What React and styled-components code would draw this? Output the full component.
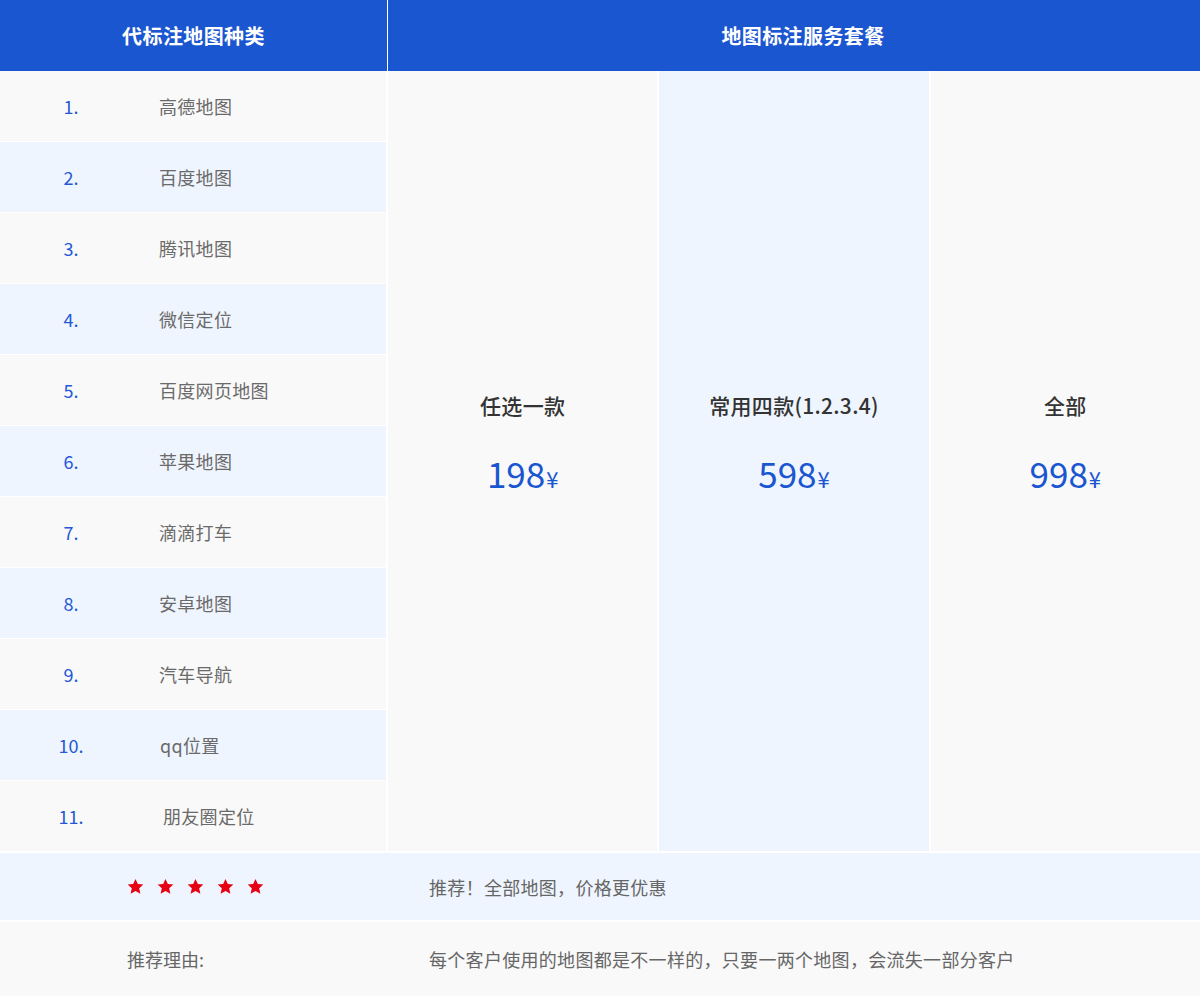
import React from 'react';
import styled, { createGlobalStyle } from 'styled-components';

const GlobalStyle = createGlobalStyle`
  html, body {
    margin: 0;
    padding: 0;
    background: #ffffff;
  }
  body {
    font-family: "Noto Sans CJK SC", "Noto Sans", sans-serif;
  }
`;

const BLUE = '#1b56d1';
const LIGHT = '#eff5fe';
const GRAY = '#f9f9f9';

const Table = styled.div`
  width: 1200px;
  height: 996px;
  overflow: hidden;
  background: #ffffff;
  display: flex;
  flex-direction: column;
`;

const Header = styled.div`
  display: grid;
  grid-template-columns: 387px 1fr;
  column-gap: 1px;
  height: 72px;
  background: #ffffff;
`;

const HeadCell = styled.div`
  background: ${BLUE};
  color: #ffffff;
  font-size: 20px;
  font-weight: 700;
  letter-spacing: 0.4px;
  display: flex;
  align-items: center;
  justify-content: center;
  padding-left: ${(p) => p.$offset || 0}px;
`;

const Body = styled.div`
  display: grid;
  grid-template-columns: 386px 1fr 1fr 1fr;
  column-gap: 2px;
  height: 781px;
`;

const MapList = styled.div`
  display: flex;
  flex-direction: column;
  gap: 1px;
`;

const MapRow = styled.div`
  height: 70px;
  flex-shrink: 0;
  background: ${(p) => (p.$alt ? LIGHT : GRAY)};
  display: grid;
  grid-template-columns: 142px 1fr;
  align-items: center;
  font-size: 18px;
`;

const Num = styled.span`
  color: #2458d6;
  text-align: center;
  font-size: 18px;
`;

const MapName = styled.span`
  color: #6a6a6a;
  padding-left: ${(p) => p.$shift || 17}px;
  letter-spacing: 0.3px;
`;

const Plan = styled.div`
  background: ${(p) => (p.$alt ? LIGHT : GRAY)};
  display: flex;
  flex-direction: column;
  align-items: center;
  justify-content: center;
  gap: 35px;
  padding-bottom: 43px;
`;

const PlanTitle = styled.div`
  color: #333333;
  font-size: 21px;
  font-weight: 500;
  letter-spacing: 0.3px;
`;

const Price = styled.div`
  color: ${BLUE};
  font-size: 35px;
  line-height: 1;
  display: flex;
  align-items: baseline;
`;

const Yen = styled.span`
  font-size: 22px;
  margin-left: 1px;
`;

const Footer = styled.div`
  display: flex;
  flex-direction: column;
  gap: 2px;
  margin-top: 2px;
`;

const FootRow = styled.div`
  height: ${(p) => p.$h}px;
  flex-shrink: 0;
  background: ${(p) => (p.$alt ? LIGHT : GRAY)};
  display: grid;
  grid-template-columns: 388px 1fr;
  align-items: center;
  color: #666666;
  font-size: 18px;
`;

const FootLabel = styled.div`
  padding-left: 127px;
  display: flex;
  align-items: center;
  gap: 13px;
`;

const FootText = styled.div`
  padding-left: 41px;
  letter-spacing: 0.3px;
`;

const maps = [
  { name: '高德地图' },
  { name: '百度地图' },
  { name: '腾讯地图' },
  { name: '微信定位' },
  { name: '百度网页地图' },
  { name: '苹果地图' },
  { name: '滴滴打车' },
  { name: '安卓地图' },
  { name: '汽车导航' },
  { name: 'qq位置', shift: 18 },
  { name: '朋友圈定位', shift: 21 },
];

const plans = [
  { title: '任选一款', price: '198' },
  { title: '常用四款(1.2.3.4)', price: '598', alt: true },
  { title: '全部', price: '998' },
];

const Star = () => (
  <svg width="17" height="17" viewBox="0 0 24 23">
    <path
      d="M12 0.8l3.3 7.2 7.8 0.8-5.9 5.3 1.7 7.8L12 17.9l-6.9 4 1.7-7.8L0.9 8.8l7.8-0.8z"
      fill="#e60012"
    />
  </svg>
);

const App = () => {
  return (
    <>
      <GlobalStyle />
      <Table>
        <Header>
          <HeadCell>代标注地图种类</HeadCell>
          <HeadCell $offset={18}>地图标注服务套餐</HeadCell>
        </Header>
        <Body>
          <MapList>
            {maps.map((m, i) => (
              <MapRow key={m.name} $alt={i % 2 === 1}>
                <Num>{i + 1}.</Num>
                <MapName $shift={m.shift}>{m.name}</MapName>
              </MapRow>
            ))}
          </MapList>
          {plans.map((p) => (
            <Plan key={p.title} $alt={p.alt}>
              <PlanTitle>{p.title}</PlanTitle>
              <Price>
                {p.price}
                <Yen>¥</Yen>
              </Price>
            </Plan>
          ))}
        </Body>
        <Footer>
          <FootRow $alt $h={67}>
            <FootLabel>
              {[0, 1, 2, 3, 4].map((n) => (
                <Star key={n} />
              ))}
            </FootLabel>
            <FootText>推荐！全部地图，价格更优惠</FootText>
          </FootRow>
          <FootRow $h={74}>
            <FootLabel>推荐理由:</FootLabel>
            <FootText>每个客户使用的地图都是不一样的，只要一两个地图，会流失一部分客户</FootText>
          </FootRow>
        </Footer>
      </Table>
    </>
  );
};

export default App;
